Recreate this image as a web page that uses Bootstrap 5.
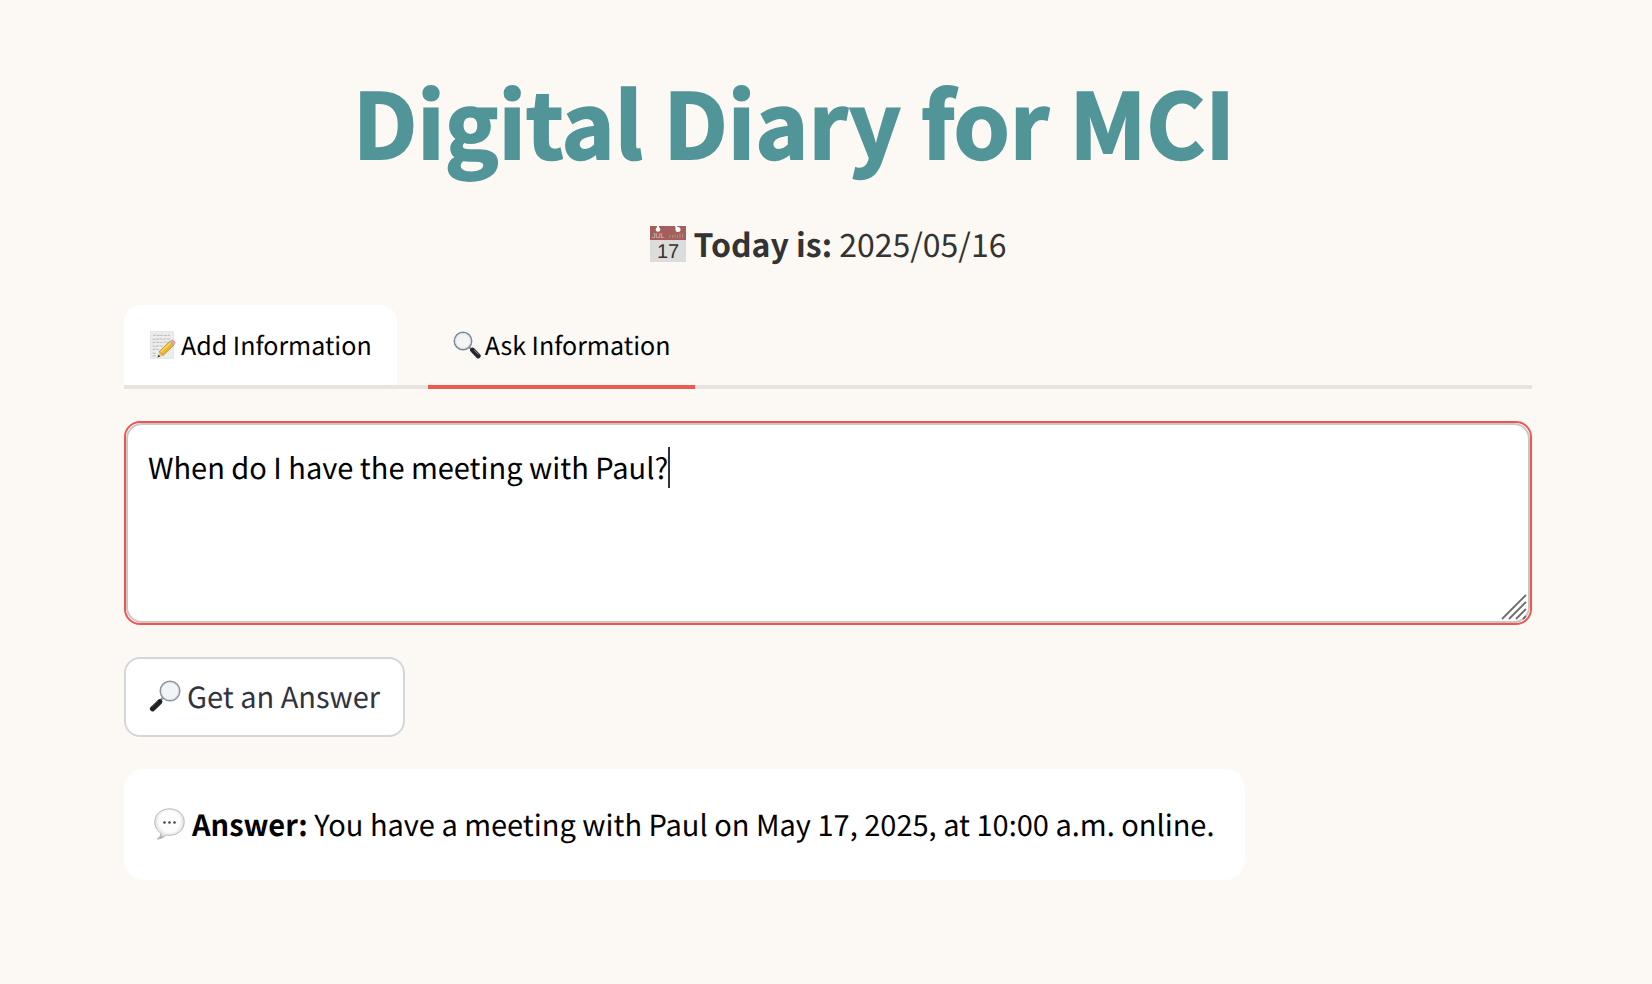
<!DOCTYPE html>
<html lang="en">
<head>
<meta charset="utf-8">
<meta name="viewport" content="width=device-width, initial-scale=1">
<title>Digital Diary for MCI</title>
<link href="https://cdn.jsdelivr.net/npm/bootstrap@5.3.0/dist/css/bootstrap.min.css" rel="stylesheet">
<style>
  body { background: #fcf9f4; color: #000; font-family: "Noto Sans CJK SC", "Noto Sans", sans-serif; font-size: 29px; line-height: 48px; text-rendering: geometricPrecision; }
  button, textarea { text-rendering: inherit; }
  svg { display: block; flex: none; }
  .diary { padding: 60px 120px 104px 124px; }
  .diary-title { color: #519599; font-size: 90px; line-height: 120px; font-weight: 700; -webkit-text-stroke: 2px #519599; padding-right: 68px; margin-bottom: 36px; }
  .diary-date { color: #333; font-size: 32px; line-height: 56px; gap: 8px; margin-bottom: 33px; }
  .diary-tabs { gap: 31px; border-bottom: 4px solid #e7e3df; margin-bottom: 32px; flex-wrap: nowrap; }
  .diary-tabs .nav-link { display: flex; align-items: center; height: 84px; margin-bottom: -4px; padding: 1px 25px 2px; border: 0; border-bottom: 4px solid transparent; border-radius: 16px 16px 0 0; color: #000; font-size: 25px; line-height: 40px; gap: 4px; }
  .diary-tabs .tab-add { background: #fff; background-clip: padding-box; }
  .diary-tabs .nav-link.active { background: transparent; border-bottom-color: #ec5a52; border-radius: 0; }
  .ask-box { border: 2px solid #f0564f; border-radius: 16px; background: #fff; margin-bottom: 32px; }
  .ask-box textarea { display: block; height: 200px; padding: 18px 20px; border: 2px solid #c8c8c8; border-radius: 16px; color: #000; font-size: 29px; line-height: 48px; resize: none; background: #fff; box-shadow: none; }
  .ask-box textarea:focus { border-color: #c8c8c8; box-shadow: none; color: #000; }
  .text-caret { left: 542px; top: 24px; width: 2px; height: 41px; background: #31333f; }
  .grip { right: 3px; bottom: 3px; }
  .btn-answer { display: inline-flex; align-items: center; height: 80px; padding: 0 23px 3px; border: 2px solid #d5d6d9; border-radius: 16px; background: #fff; color: #31333f; font-size: 29px; line-height: 48px; gap: 6px; margin-bottom: 32px; }
  .btn-answer:hover { background: #fff; border-color: #ec5a52; color: #ec5a52; }
  .answer-card { display: flex; width: fit-content; align-items: center; background: #fff; border-radius: 20px; padding: 31px 30px 32px; gap: 6px; }
</style>
</head>
<body>
<main class="diary">
  <h1 class="diary-title text-center mt-0">Digital Diary for MCI</h1>

  <div class="diary-date d-flex justify-content-center align-items-center">
    <svg width="36" height="36" viewBox="0 0 36 36" aria-hidden="true">
      <rect width="36" height="36" fill="#dcdcdc"/>
      <rect width="36" height="14" fill="#a35f5d"/>
      <circle cx="8" cy="3.5" r="2.3" fill="#fff"/><path d="M7 0h2v3H7zM25 0l2 0 1 3-2 1z" fill="#fff"/><circle cx="28" cy="3.5" r="2.5" fill="#fff"/>
      <text x="2" y="12" font-size="7" fill="#e0c4c2" font-family="Liberation Sans, sans-serif">JUL</text>
      <path d="M20 9v3M22.500 9v3M25 8v4M27.500 9v3M30 7v5M32.500 8v4" stroke="#bd8583" stroke-width="1"/>
      <text x="18" y="32" text-anchor="middle" font-size="20" fill="#333" font-family="Liberation Sans, sans-serif">17</text>
    </svg>
    <span><strong>Today is:</strong> 2025/05/16</span>
  </div>

  <ul class="nav diary-tabs" role="tablist">
    <li class="nav-item" role="presentation">
      <button class="nav-link tab-add" type="button" role="tab" aria-selected="false">
        <svg width="28" height="28" viewBox="0 0 28 28" aria-hidden="true">
          <rect x="1.300" y=".5" width="23.500" height="27" fill="#ececec" stroke="#dedede" stroke-width=".6"/>
          <path d="M4 4.500l3-.5 3 .6 4-.4 3 .5 4-.5M3.500 8l3 .4 4-.7 3 .6 5-.5 3 .4M3.500 11.500l4-.4 4 .5 4-.6 4 .5M3.500 15l3 .4 4-.7 4 .5M3.500 18.500l4-.4 3 .6M3.500 22l3 .4M3.500 25l3-.3" fill="none" stroke="#a5a5a5" stroke-width=".7" stroke-dasharray="3 .7"/>
          <path d="M8.500 26.500l1.700-5.800 3.900 3.700z" fill="#ecc890"/>
          <path d="M8.500 26.500l.8-2.800 2 1.900z" fill="#333"/>
          <path d="M10.200 20.700L20.600 10.400l4.200 3.800-10.700 10.200z" fill="#efb52d" stroke="#9a7127" stroke-width=".6"/>
          <path d="M11.600 21.200L21.800 11.500" stroke="#ffda63" stroke-width="1.300"/>
          <path d="M20.600 10.400l1.200-1.200 4.200 3.800-1.200 1.200z" fill="#aab3b6"/>
          <path d="M21.800 9.200c1.700-1.500 5.800 2 4.400 3.700z" fill="#ed8790"/>
        </svg>
        <span>Add Information</span>
      </button>
    </li>
    <li class="nav-item" role="presentation">
      <button class="nav-link active" type="button" role="tab" aria-selected="true">
        <svg width="28" height="28" viewBox="0 0 28 28" aria-hidden="true">
          <path d="M16.500 16.500l3 3" stroke="#8c9196" stroke-width="2.200"/>
          <path d="M19.500 19l5.800 6" stroke="#25282b" stroke-width="4.800" stroke-linecap="round"/>
          <path d="M21 18.700l4.600 4.800" stroke="#888d91" stroke-width="1"/>
          <circle cx="10" cy="10" r="8.700" fill="#f3f4f4" stroke="#7b8896" stroke-width="1.500"/>
          <circle cx="10" cy="10" r="7.500" fill="none" stroke="#d5dce2" stroke-width=".8"/>
        </svg>
        <span>Ask Information</span>
      </button>
    </li>
  </ul>

  <div class="ask-box position-relative">
    <textarea class="form-control" aria-label="Your question" spellcheck="false">When do I have the meeting with Paul?</textarea>
    <span class="text-caret position-absolute"></span>
    <svg class="grip position-absolute" width="26" height="26" viewBox="0 0 26 26" aria-hidden="true">
      <path d="M1 25L25 1M8 25L25 8M15 25l10-10M22 25l3-3" stroke="#6d6d6d" stroke-width="1.800"/>
    </svg>
  </div>

  <button class="btn btn-answer" type="button">
    <svg width="32" height="32" viewBox="0 0 32 32" aria-hidden="true">
      <path d="M10.500 21.500l3.200-3.500" stroke="#8c9196" stroke-width="2.400"/>
      <path d="M3.500 28.800l7.200-7" stroke="#202224" stroke-width="5.200" stroke-linecap="round"/>
      <path d="M2.800 26.500l6-5.900" stroke="#777" stroke-width="1"/>
      <circle cx="21" cy="11" r="9.800" fill="#f3f4f6" stroke="#8b96a0" stroke-width="1.500"/>
      <circle cx="21" cy="11" r="8.600" fill="none" stroke="#cfd8e0" stroke-width=".8"/>
    </svg>
    <span>Get an Answer</span>
  </button>

  <section class="answer-card">
    <svg width="32" height="32" viewBox="0 0 32 32" aria-hidden="true">
      <defs>
        <radialGradient id="bubble" cx=".5" cy=".42" r=".58"><stop offset=".6" stop-color="#fcfcfc"/><stop offset=".85" stop-color="#e2e2e2"/><stop offset="1" stop-color="#b5b5b5"/></radialGradient>
      </defs>
      <path d="M15.500 .8C7.500 .8 .8 6 .8 14c0 5 2.500 9 6.100 11.300-.2 2.500-1.400 4.300-3.700 5.700 3.700 0 6.600-1.500 8.800-4 1.100.2 2.200.3 3.500.3C23.500 27.300 30.200 22 30.200 14S23.500 .8 15.500 .8z" fill="url(#bubble)" stroke="#b2b2b2" stroke-width=".9"/>
      <g fill="#444"><circle cx="10.500" cy="14.500" r="1.300"/><circle cx="15.500" cy="14.500" r="1.300"/><circle cx="20.500" cy="14.500" r="1.300"/></g>
    </svg>
    <span><strong>Answer:</strong> You have a meeting with Paul on May 17, 2025, at 10:00 a.m. online.</span>
  </section>
</main>
<script src="https://cdn.jsdelivr.net/npm/bootstrap@5.3.0/dist/js/bootstrap.bundle.min.js"></script>
</body>
</html>
